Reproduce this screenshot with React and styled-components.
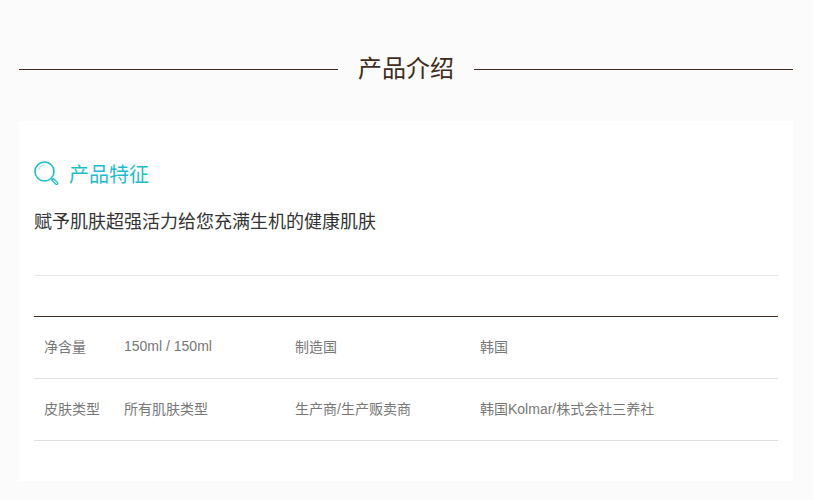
import React from 'react'
import styled, { createGlobalStyle } from 'styled-components'

const GlobalStyle = createGlobalStyle`
    html, body {
        margin: 0;
        padding: 0;
        background: #fbfbfb;
    }
    body {
        font-family: "Liberation Sans", "Noto Sans CJK SC", sans-serif;
    }
`

const specs = [
    ['净含量', '150ml / 150ml', '制造国', '韩国'],
    ['皮肤类型', '所有肌肤类型', '生产商/生产贩卖商', '韩国Kolmar/株式会社三养社'],
]

const App = () => {
    return (
        <Page>
            <GlobalStyle />
            <SectionTitle>
                <h2>产品介绍</h2>
            </SectionTitle>
            <Card>
                <FeatureHeading>
                    <svg width="25" height="24" viewBox="0 0 25 24" fill="none" stroke="#1bbccb">
                        <circle cx="10.500" cy="10.500" r="9.500" strokeWidth="1.600" />
                        <path d="M5 9a6 6 0 0 1 6-5" strokeWidth="1" opacity=".45" />
                        <path d="M17.500 17.500l1.800 1.800" strokeWidth="1.400" />
                        <path d="M19.500 17.800l4 3.700a1.200 1.200 0 0 1-1.900 1.500l-3.700-3.700z" strokeWidth="1.200" />
                    </svg>
                    产品特征
                </FeatureHeading>
                <FeatureText>赋予肌肤超强活力给您充满生机的健康肌肤</FeatureText>
                <Divider />
                <SpecTable>
                    <colgroup>
                        <col width="80" />
                        <col width="171" />
                        <col width="185" />
                        <col />
                    </colgroup>
                    <tbody>
                        {specs.map((row) => (
                            <tr key={row[0]}>
                                {row.map((cell) => (
                                    <td key={cell}>{cell}</td>
                                ))}
                            </tr>
                        ))}
                    </tbody>
                </SpecTable>
            </Card>
        </Page>
    )
}

const Page = styled.div`
    width: 813px;
    height: 500px;
    padding: 41px 20px 19px 19px;
    box-sizing: border-box;
    overflow: hidden;
`

const SectionTitle = styled.div`
    display: flex;
    align-items: center;
    height: 56px;
    margin-bottom: 24px;

    &::before,
    &::after {
        content: "";
        flex: 1;
        height: 1px;
        background: #3f2b20;
    }

    h2 {
        margin: 0;
        padding: 0 20px;
        font-size: 24px;
        font-weight: 400;
        line-height: 56px;
        color: #3f2b20;
    }
`

const Card = styled.div`
    height: 360px;
    padding: 40px 15px 0;
    box-sizing: border-box;
    background: #fff;
`

const FeatureHeading = styled.h3`
    display: flex;
    align-items: center;
    gap: 10px;
    margin: 0;
    height: 24px;
    font-size: 20px;
    font-weight: 400;
    color: #1bbccb;
`

const FeatureText = styled.p`
    margin: 24px 0 0;
    font-size: 18px;
    line-height: 26px;
    color: #333;
`

const Divider = styled.hr`
    margin: 40px 0 0;
    border: 0;
    height: 1px;
    background: #e5e5e5;
`

const SpecTable = styled.table`
    width: 100%;
    margin-top: 40px;
    border-collapse: collapse;
    table-layout: fixed;
    border-top: 1px solid #3f2b20;

    td {
        height: 57px;
        padding: 0 10px 4px;
        font-size: 14px;
        color: #777;
        border-bottom: 1px solid #e3e0dc;
    }
`

export default App
